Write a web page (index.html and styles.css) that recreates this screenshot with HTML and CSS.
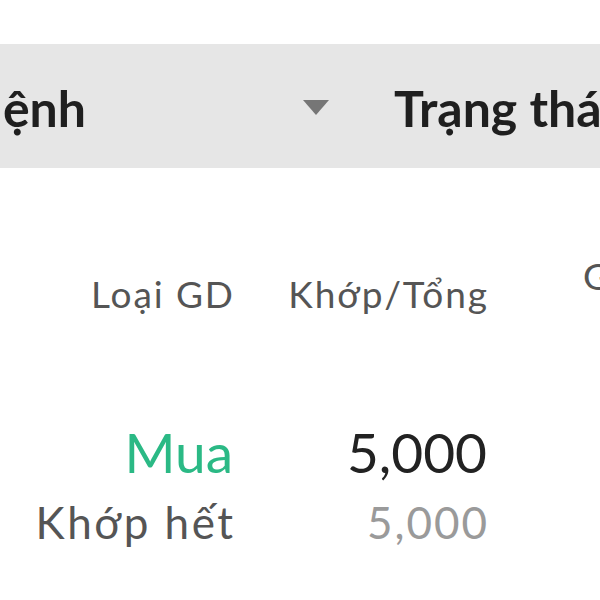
FILE: index.html
```html
<!DOCTYPE html>
<html lang="vi">
<head>
<meta charset="utf-8">
<link rel="stylesheet" href="styles.css">
</head>
<body>
<div class="filter-bar">
  <div class="filter-cell first"><span class="filter-label">Loại lệnh</span></div>
  <div class="caret-cell"><svg class="caret" width="26" height="16" viewBox="0 0 26 16"><polygon points="0,0 26,0 13,15" fill="#767676"/></svg></div>
  <div class="filter-label status">Trạng thái</div>
</div>
<div class="orders">
  <div class="col-head right">Loại GD</div>
  <div class="col-head right">Khớp/Tổng</div>
  <div class="col-head left raised">Giá</div>

  <div class="cell right">
    <div class="main buy">Mua</div>
    <div class="sub">Khớp hết</div>
  </div>
  <div class="cell right">
    <div class="main">5,000</div>
    <div class="sub light">5,000</div>
  </div>
  <div class="cell left"></div>
</div>
</body>
</html>
```
FILE: styles.css
```css
html, body {
  margin: 0;
  padding: 0;
  background: #ffffff;
  overflow: hidden;
}
body {
  width: 600px;
  height: 600px;
  font-family: Lato, "Noto Sans", sans-serif;
  color: #222222;
}
.filter-bar {
  margin-top: 44px;
  height: 124px;
  background: #e6e6e6;
  display: flex;
  align-items: center;
  white-space: nowrap;
  overflow: hidden;
}
.filter-cell.first {
  width: 86px;
  flex: 0 0 86px;
  display: flex;
  justify-content: flex-end;
}
.filter-label {
  font-size: 50px;
  font-weight: 700;
  color: #1f1f1f;
  line-height: 1;
  padding-top: 4px;
}
.caret-cell {
  flex: 0 0 auto;
  margin-left: 217px;
  display: flex;
  align-items: center;
  margin-top: 4px;
}
.status {
  margin-left: 65px;
}
.orders {
  margin-top: 103px;
  display: grid;
  grid-template-columns: 233px 254px 1fr;
  white-space: nowrap;
}
.col-head {
  font-size: 37px;
  color: #555555;
  line-height: 45px;
  letter-spacing: 1.9px;
  margin-right: -1.9px;
}
.right { text-align: right; }
.left { text-align: left; padding-left: 96px; }
.raised { margin-top: -18px; margin-right: 0; }
.cell {
  margin-top: 104px;
}
.main {
  font-size: 55px;
  line-height: 64px;
  color: #222222;
}
.main.buy { color: #2bb985; }
.sub {
  font-size: 44px;
  line-height: 58px;
  margin-top: 9px;
  color: #555555;
  letter-spacing: 2.5px;
  margin-right: -2.5px;
}
.sub.light { color: #9a9a9a; letter-spacing: 2px; margin-right: -2px; }
```
